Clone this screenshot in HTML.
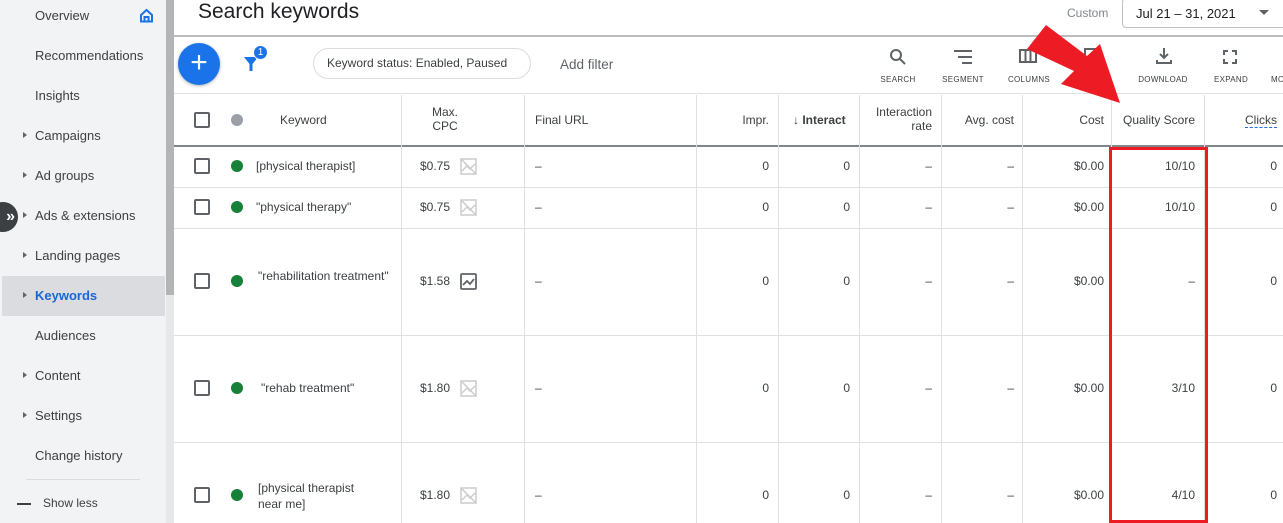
<!DOCTYPE html>
<html><head><meta charset="utf-8"><style>
*{margin:0;padding:0;box-sizing:border-box}
body{width:1283px;height:523px;overflow:hidden;background:#fff;font-family:"Liberation Sans",Arial,sans-serif;position:relative;color:#3c4043}
.a{position:absolute;white-space:nowrap}
.side{left:0;top:0;width:166px;height:523px;background:#f1f3f4}
.nav{font-size:13px;color:#3c4043;left:35px}
.tri{position:absolute;left:-12px;top:4px;width:0;height:0;border-left:4px solid #5f6368;border-top:3.5px solid transparent;border-bottom:3.5px solid transparent}
.vl{position:absolute;top:95px;width:1px;height:428px;background:#e0e0e0}
.hl{position:absolute;left:174px;width:1109px;height:1px;background:#e0e0e0}
.cb{position:absolute;left:194px;width:16px;height:16px;border:2px solid #5f6368;border-radius:2px}
.dot{position:absolute;left:231px;width:12px;height:12px;border-radius:50%;background:#188038}
.t{font-size:12px;color:#3c4043}
.r{text-align:right}
.h{font-size:12px;color:#3c4043}
.lab{font-size:8px;color:#3c4043;letter-spacing:.3px;text-align:center;width:60px}
</style></head><body>
<div class="a side"></div>
<div class="a" style="left:166px;top:0;width:8px;height:523px;background:#e8e8e8"></div>
<div class="a" style="left:166px;top:0;width:8px;height:295px;background:#b4b4b4"></div>
<div class="a" style="left:2px;top:276px;width:163px;height:40px;background:#dadce0"></div>
<div class="a nav" style="top:8px">Overview</div>
<svg class="a" style="left:139px;top:8px" width="15" height="15" viewBox="0 0 15 15"><path d="M2 7 L7.5 2 L13 7 V13.5 H2 Z M5.5 13.5 V9 H9.5 V13.5" fill="none" stroke="#1a73e8" stroke-width="2"/></svg>
<div class="a nav" style="top:48px">Recommendations</div>
<div class="a nav" style="top:88px">Insights</div>
<div class="a nav" style="top:128px"><span class="tri"></span>Campaigns</div>
<div class="a nav" style="top:168px"><span class="tri"></span>Ad groups</div>
<div class="a nav" style="top:208px"><span class="tri"></span>Ads &amp; extensions</div>
<div class="a nav" style="top:248px"><span class="tri"></span>Landing pages</div>
<div class="a nav" style="top:288px;color:#1967d2;font-weight:bold"><span class="tri"></span>Keywords</div>
<div class="a nav" style="top:328px">Audiences</div>
<div class="a nav" style="top:368px"><span class="tri"></span>Content</div>
<div class="a nav" style="top:408px"><span class="tri"></span>Settings</div>
<div class="a nav" style="top:448px">Change history</div>
<div class="a" style="left:26px;top:479px;width:114px;height:1px;background:#dadce0"></div>
<div class="a" style="left:17px;top:503px;width:14px;height:2px;background:#3c4043"></div>
<div class="a" style="left:43px;top:496px;font-size:12px;color:#3c4043">Show less</div>
<div class="a" style="left:-12px;top:202px;width:30px;height:30px;border-radius:50%;background:#3c4043;color:#fff;font-size:16px;line-height:30px;text-align:right;padding-right:3px;font-weight:bold">»</div>

<div class="a" style="left:198px;top:0px;font-size:21px;color:#202124">Search keywords</div>
<div class="a" style="left:1067px;top:6px;font-size:12px;color:#80868b">Custom</div>
<div class="a" style="left:1122px;top:-2px;width:170px;height:30px;border:1px solid #bdc1c6;border-radius:4px"></div>
<div class="a" style="left:1136px;top:6px;font-size:13px;color:#202124">Jul 21 – 31, 2021</div>
<div class="a" style="left:1259px;top:10px;border-left:5px solid transparent;border-right:5px solid transparent;border-top:5px solid #5f6368"></div>
<div class="a" style="left:174px;top:35px;width:1109px;height:2px;background:#bdbdbd"></div>

<div class="a" style="left:178px;top:43px;width:42px;height:42px;border-radius:50%;background:#1a73e8;box-shadow:0 1px 3px rgba(0,0,0,.3);color:#fff;font-size:30px;line-height:40px;text-align:center">+</div>
<svg class="a" style="left:243px;top:55px" width="16" height="18" viewBox="0 0 16 18"><path d="M1 2 H15 L9.5 9 V16 H6.5 V9 Z" fill="#1a73e8"/></svg>
<div class="a" style="left:253px;top:45px;width:15px;height:15px;border-radius:50%;background:#1a73e8;border:1px solid #fff;color:#fff;font-size:10px;line-height:13px;text-align:center">1</div>
<div class="a" style="left:313px;top:48px;width:218px;height:31px;border:1px solid #dadce0;border-radius:16px;font-size:12px;line-height:29px;padding-left:13px;color:#3c4043">Keyword status: Enabled, Paused</div>
<div class="a" style="left:560px;top:57px;font-size:13.5px;color:#5f6368">Add filter</div>

<svg class="a" style="left:889px;top:48px" width="18" height="18" viewBox="0 0 18 18"><circle cx="7" cy="7" r="5" fill="none" stroke="#5f6368" stroke-width="2"/><path d="M11 11 L16 16" stroke="#5f6368" stroke-width="2"/></svg>
<svg class="a" style="left:954px;top:50px" width="18" height="14"><path d="M0 1H18M4 7H18M8 13H18" stroke="#5f6368" stroke-width="2"/></svg>
<svg class="a" style="left:1019px;top:49px" width="18" height="14"><rect x="1" y="1" width="16" height="12" fill="none" stroke="#5f6368" stroke-width="2"/><path d="M6.5 1V13M11.5 1V13" stroke="#5f6368" stroke-width="2"/></svg>
<svg class="a" style="left:1084px;top:48px" width="16" height="16"><rect x="1" y="1" width="14" height="14" fill="none" stroke="#5f6368" stroke-width="2"/></svg>
<svg class="a" style="left:1155px;top:47px" width="18" height="18"><path d="M9 1V11M5 7L9 11L13 7M2 13V16H16V13" fill="none" stroke="#5f6368" stroke-width="2"/></svg>
<svg class="a" style="left:1223px;top:50px" width="14" height="14"><path d="M1 5V1H5M9 1H13V5M13 9V13H9M5 13H1V9" fill="none" stroke="#5f6368" stroke-width="2"/></svg>
<div class="a lab" style="left:868px;top:75px">SEARCH</div>
<div class="a lab" style="left:933px;top:75px">SEGMENT</div>
<div class="a lab" style="left:999px;top:75px">COLUMNS</div>
<div class="a lab" style="left:1133px;top:75px">DOWNLOAD</div>
<div class="a lab" style="left:1201px;top:75px">EXPAND</div>
<div class="a lab" style="left:1271px;top:75px;text-align:left">MO</div>

<div class="hl" style="top:93px"></div>
<div class="a" style="left:174px;top:145px;width:1109px;height:2px;background:#80868b"></div>
<div class="hl" style="top:187px"></div>
<div class="hl" style="top:228px"></div>
<div class="hl" style="top:335px"></div>
<div class="hl" style="top:442px"></div>
<div class="vl" style="left:401px"></div>
<div class="vl" style="left:524px"></div>
<div class="vl" style="left:696px"></div>
<div class="vl" style="left:778px"></div>
<div class="vl" style="left:859px"></div>
<div class="vl" style="left:941px"></div>
<div class="vl" style="left:1022px"></div>
<div class="vl" style="left:1111px"></div>
<div class="vl" style="left:1204px"></div>

<div class="cb" style="top:112px"></div>
<div class="dot" style="left:231px;top:114px;background:#9aa0a6"></div>
<div class="a h" style="left:280px;top:113px">Keyword</div>
<div class="a h" style="left:420px;top:105px;text-align:center;width:50px;line-height:14px">Max.<br>CPC</div>
<div class="a h" style="left:535px;top:113px">Final URL</div>
<div class="a h r" style="left:700px;top:113px;width:69px">Impr.</div>
<div class="a h" style="left:793px;top:113px;font-weight:bold;width:58px;overflow:hidden">↓ Interact</div>
<div class="a h r" style="left:862px;top:105px;width:70px;line-height:14px">Interaction<br>rate</div>
<div class="a h r" style="left:944px;top:113px;width:70px">Avg. cost</div>
<div class="a h r" style="left:1025px;top:113px;width:79px">Cost</div>
<div class="a h" style="left:1123px;top:113px">Quality Score</div>
<div class="a h" style="left:1245px;top:113px;border-bottom:1px dashed #1a73e8">Clicks</div>

<!-- rows -->
<div class="cb" style="top:158px"></div><div class="dot" style="top:160px"></div>
<div class="a t" style="left:256px;top:159px">[physical therapist]</div>
<div class="cb" style="top:199px"></div><div class="dot" style="top:201px"></div>
<div class="a t" style="left:256px;top:200px">"physical therapy"</div>
<div class="cb" style="top:273px"></div><div class="dot" style="top:275px"></div>
<div class="a t" style="left:258px;top:269px">"rehabilitation treatment"</div>
<div class="cb" style="top:380px"></div><div class="dot" style="top:382px"></div>
<div class="a t" style="left:261px;top:381px">"rehab treatment"</div>
<div class="cb" style="top:487px"></div><div class="dot" style="top:489px"></div>
<div class="a t" style="left:258px;top:480px;line-height:16px">[physical therapist<br>near me]</div>

<div class="a t" style="left:420px;top:159px">$0.75</div>
<div class="a t" style="left:420px;top:200px">$0.75</div>
<div class="a t" style="left:420px;top:274px">$1.58</div>
<div class="a t" style="left:420px;top:381px">$1.80</div>
<div class="a t" style="left:420px;top:488px">$1.80</div>
<svg class="a" style="left:460px;top:158px" width="17" height="17"><rect x="1" y="1" width="15" height="15" fill="none" stroke="#ccc" stroke-width="1.5"/><path d="M1 1L16 16M2 13L7 8L10 11L15 6" stroke="#ccc" stroke-width="1.5" fill="none"/></svg>
<svg class="a" style="left:460px;top:199px" width="17" height="17"><rect x="1" y="1" width="15" height="15" fill="none" stroke="#ccc" stroke-width="1.5"/><path d="M1 1L16 16M2 13L7 8L10 11L15 6" stroke="#ccc" stroke-width="1.5" fill="none"/></svg>
<svg class="a" style="left:460px;top:273px" width="17" height="17"><rect x="1" y="1" width="15" height="15" rx="1" fill="none" stroke="#5f6368" stroke-width="1.8"/><path d="M3 12L7 8L10 11L14 6" stroke="#5f6368" stroke-width="1.8" fill="none"/></svg>
<svg class="a" style="left:460px;top:380px" width="17" height="17"><rect x="1" y="1" width="15" height="15" fill="none" stroke="#ccc" stroke-width="1.5"/><path d="M1 1L16 16M2 13L7 8L10 11L15 6" stroke="#ccc" stroke-width="1.5" fill="none"/></svg>
<svg class="a" style="left:460px;top:487px" width="17" height="17"><rect x="1" y="1" width="15" height="15" fill="none" stroke="#ccc" stroke-width="1.5"/><path d="M1 1L16 16M2 13L7 8L10 11L15 6" stroke="#ccc" stroke-width="1.5" fill="none"/></svg>

<div class="a t" style="left:535px;top:159px">–</div>
<div class="a t" style="left:535px;top:200px">–</div>
<div class="a t" style="left:535px;top:274px">–</div>
<div class="a t" style="left:535px;top:381px">–</div>
<div class="a t" style="left:535px;top:488px">–</div>

<!-- numeric columns -->
<div class="a t r" style="left:700px;top:159px;width:69px">0</div>
<div class="a t r" style="left:700px;top:200px;width:69px">0</div>
<div class="a t r" style="left:700px;top:274px;width:69px">0</div>
<div class="a t r" style="left:700px;top:381px;width:69px">0</div>
<div class="a t r" style="left:700px;top:488px;width:69px">0</div>
<div class="a t r" style="left:780px;top:159px;width:70px">0</div>
<div class="a t r" style="left:780px;top:200px;width:70px">0</div>
<div class="a t r" style="left:780px;top:274px;width:70px">0</div>
<div class="a t r" style="left:780px;top:381px;width:70px">0</div>
<div class="a t r" style="left:780px;top:488px;width:70px">0</div>
<div class="a t r" style="left:862px;top:159px;width:70px">–</div>
<div class="a t r" style="left:862px;top:200px;width:70px">–</div>
<div class="a t r" style="left:862px;top:274px;width:70px">–</div>
<div class="a t r" style="left:862px;top:381px;width:70px">–</div>
<div class="a t r" style="left:862px;top:488px;width:70px">–</div>
<div class="a t r" style="left:944px;top:159px;width:70px">–</div>
<div class="a t r" style="left:944px;top:200px;width:70px">–</div>
<div class="a t r" style="left:944px;top:274px;width:70px">–</div>
<div class="a t r" style="left:944px;top:381px;width:70px">–</div>
<div class="a t r" style="left:944px;top:488px;width:70px">–</div>
<div class="a t r" style="left:1025px;top:159px;width:79px">$0.00</div>
<div class="a t r" style="left:1025px;top:200px;width:79px">$0.00</div>
<div class="a t r" style="left:1025px;top:274px;width:79px">$0.00</div>
<div class="a t r" style="left:1025px;top:381px;width:79px">$0.00</div>
<div class="a t r" style="left:1025px;top:488px;width:79px">$0.00</div>
<div class="a t r" style="left:1115px;top:159px;width:80px">10/10</div>
<div class="a t r" style="left:1115px;top:200px;width:80px">10/10</div>
<div class="a t r" style="left:1115px;top:274px;width:80px">–</div>
<div class="a t r" style="left:1115px;top:381px;width:80px">3/10</div>
<div class="a t r" style="left:1115px;top:488px;width:80px">4/10</div>
<div class="a t r" style="left:1207px;top:159px;width:70px">0</div>
<div class="a t r" style="left:1207px;top:200px;width:70px">0</div>
<div class="a t r" style="left:1207px;top:274px;width:70px">0</div>
<div class="a t r" style="left:1207px;top:381px;width:70px">0</div>
<div class="a t r" style="left:1207px;top:488px;width:70px">0</div>

<div class="a" style="left:1109px;top:147px;width:99px;height:376px;border:3px solid #ed1c24;border-bottom-width:3px"></div>
<svg class="a" style="left:0;top:0" width="1283" height="523"><polygon points="1046,25 1087,56 1100,44 1120,103 1061,84 1074,71 1027,49" fill="#ed1c24"/></svg>
</body></html>
